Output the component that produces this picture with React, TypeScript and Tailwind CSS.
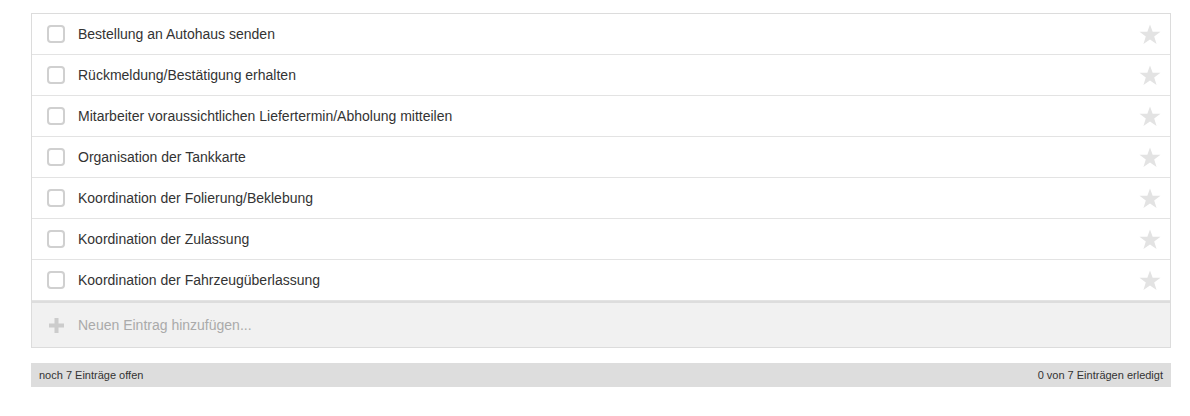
import React from "react";

const items = [
  "Bestellung an Autohaus senden",
  "Rückmeldung/Bestätigung erhalten",
  "Mitarbeiter voraussichtlichen Liefertermin/Abholung mitteilen",
  "Organisation der Tankkarte",
  "Koordination der Folierung/Beklebung",
  "Koordination der Zulassung",
  "Koordination der Fahrzeugüberlassung",
];

function Star() {
  return (
    <svg width="22" height="21" viewBox="0 0 24 23" className="shrink-0">
      <path
        d="M12 0.5l2.9 8.1h8.6l-6.9 5.1 2.6 8.3L12 17l-7.2 5 2.6-8.3L0.5 8.6h8.6z"
        fill="#e3e3e3"
      />
    </svg>
  );
}

export default function App() {
  return (
    <div
      className="w-[1190px] h-[416px] bg-white pt-[13px] pl-[31px]"
      style={{ fontFamily: '"Liberation Sans", Arial, sans-serif' }}
    >
      <div className="w-[1140px]">
        <div className="border border-[#dcdcdc]">
          {items.map((t, i) => (
            <div
              key={i}
              className="flex items-center h-[41px] border-b border-[#e3e3e3] pl-[15px] pr-[9px]"
            >
              <div className="w-[18px] h-[18px] rounded-[4px] border-2 border-[#d0d0d0] bg-white shrink-0" />
              <span className="ml-[13px] text-[14px] text-[#333] flex-1 leading-none">
                {t}
              </span>
              <Star />
            </div>
          ))}
          <div className="border-t-2 border-[#dddddd] bg-[#f1f1f1] h-[46px] flex items-center pl-[17px]">
            <svg width="15" height="15" viewBox="0 0 15 15" className="shrink-0">
              <rect x="5.5" y="0" width="4" height="15" fill="#cccccc" />
              <rect x="0" y="5.5" width="15" height="4" fill="#cccccc" />
            </svg>
            <span className="ml-[14px] text-[14px] text-[#aaaaaa] leading-none">
              Neuen Eintrag hinzufügen...
            </span>
          </div>
        </div>
        <div className="mt-[15px] h-[24px] bg-[#dddddd] flex items-center justify-between px-[8px] text-[11px] text-[#333]">
          <span>noch 7 Einträge offen</span>
          <span>0 von 7 Einträgen erledigt</span>
        </div>
      </div>
    </div>
  );
}
